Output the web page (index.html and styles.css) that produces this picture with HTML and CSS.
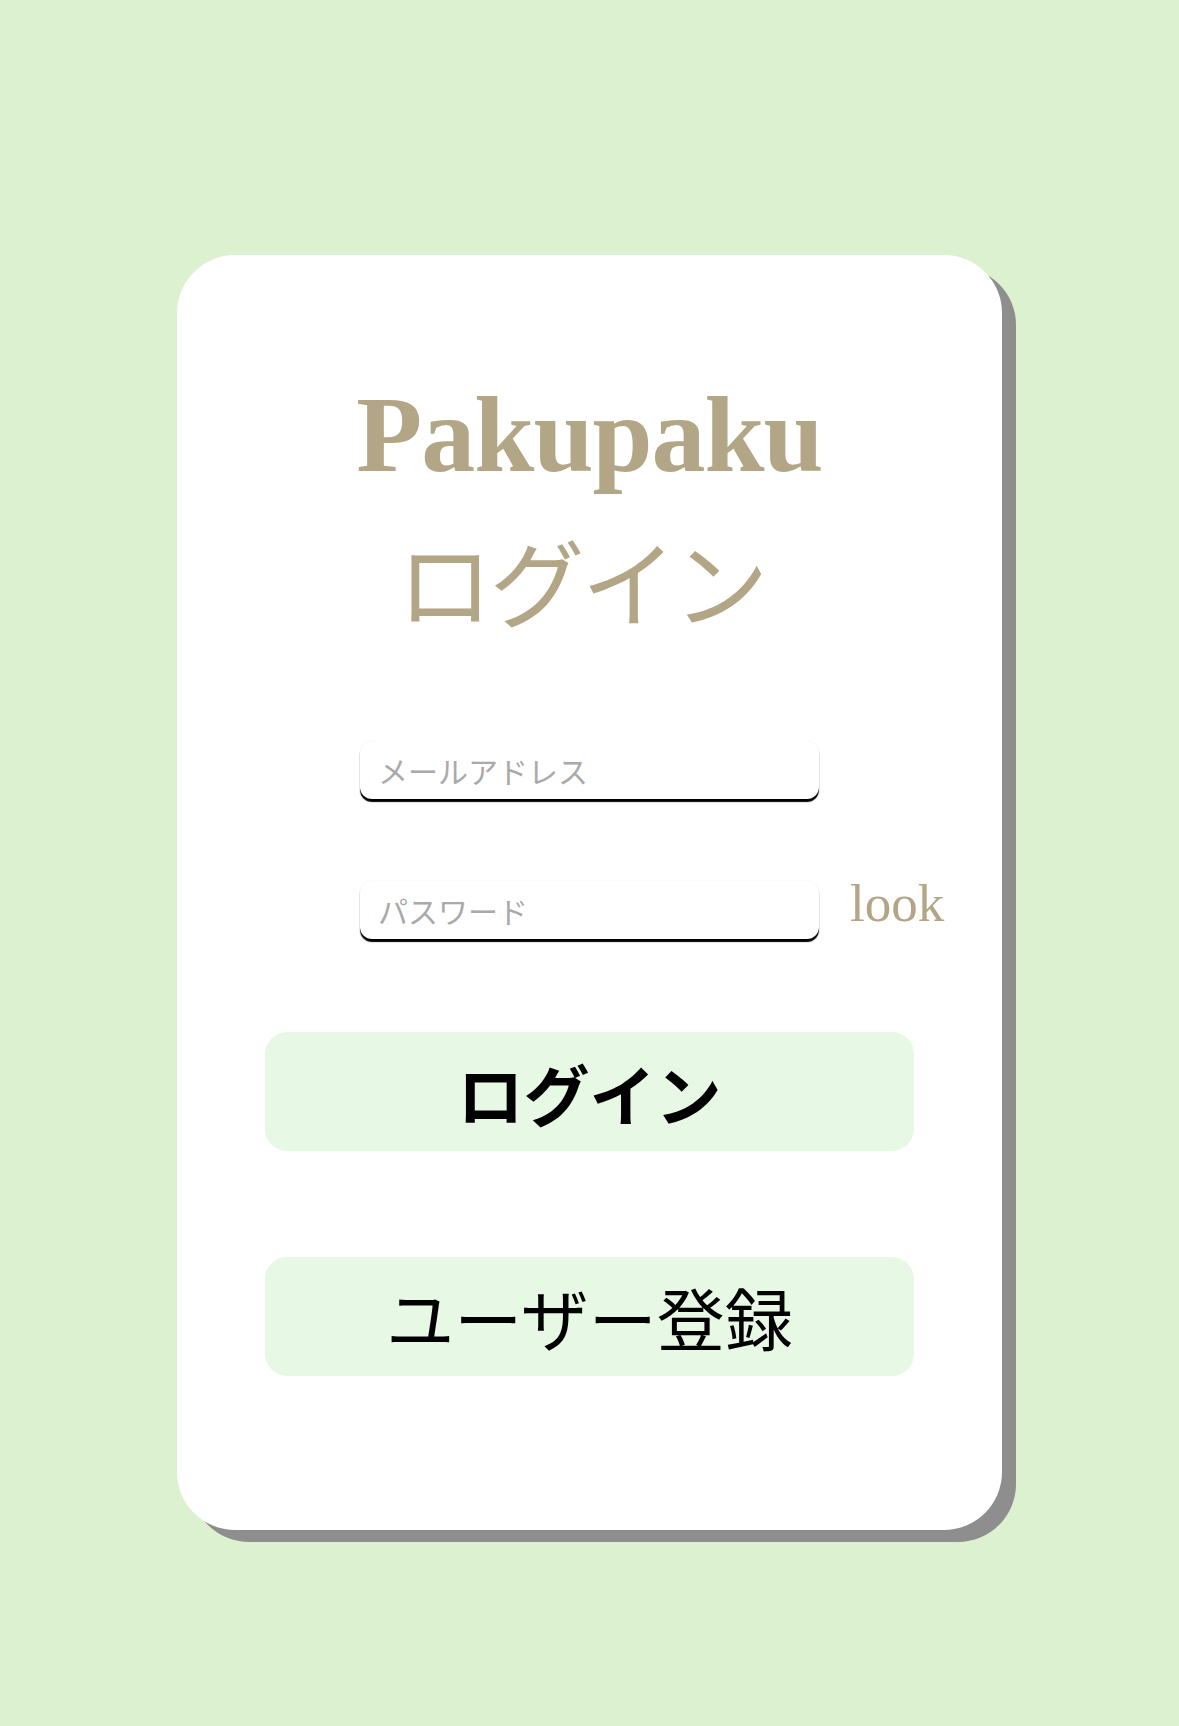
FILE: index.html
```html
<!DOCTYPE html>
<html lang="ja">
<head>
    <meta charset="UTF-8">
    <meta name="viewport" content="width=device-width, initial-scale=1.0">
    <title>Pakupaku ログイン</title>
    <link rel="stylesheet" href="styles.css">
</head>
<body>
    <div class="login-card">
        <h1 class="login-title">
            <span class="title-app">Pakupaku</span>
            <span class="title-page">ログイン</span>
        </h1>

        <form id="loginForm" class="login-form">
            <div class="field-row">
                <input type="email" name="email" placeholder="メールアドレス" required>
            </div>
            <div class="field-row field-row-pass">
                <input type="password" name="password" placeholder="パスワード" required>
                <span class="look-toggle" id="lookToggle">look</span>
            </div>
            <button type="submit" class="main-button login-button">ログイン</button>
        </form>

        <button class="main-button register-button">ユーザー登録</button>
    </div>

    <script>
        const lookToggle = document.getElementById("lookToggle");
        const passInput = document.querySelector("input[name=password]");

        lookToggle.addEventListener("click", () => {
            passInput.type = passInput.type == "password" ? "text" : "password";
        });

        document.getElementById("loginForm").addEventListener("submit", e => {
            e.preventDefault();
        });
    </script>
</body>
</html>
```

FILE: styles.css
```css
body {
    margin: 0;
    padding: 255px 0 0;
    min-height: 100vh;
    box-sizing: border-box;
    background-color: #dcf1d0;
    font-family: "Noto Sans CJK JP", "Noto Sans", sans-serif;
}

.login-card {
    width: 825px;
    height: 1275px;
    margin: 0 auto;
    box-sizing: border-box;
    padding-top: 126px;
    background: #fff;
    border-radius: 58px;
    box-shadow: 14px 12px 0 #8e8e8e;
    display: flex;
    flex-direction: column;
    align-items: center;
}

.login-title {
    margin: 0;
    display: flex;
    flex-direction: column;
    align-items: center;
    color: #b3a687;
    font-weight: normal;
}

.title-app {
    font-family: "Liberation Serif", "Noto Sans CJK JP", serif;
    font-weight: bold;
    font-size: 108px;
    line-height: 1;
    letter-spacing: -1px;
}

.title-page {
    margin-top: 43px;
    margin-right: 16px;
    font-family: "Noto Sans CJK JP", sans-serif;
    font-size: 95px;
    line-height: 1;
    letter-spacing: -3px;
}

.login-form {
    width: 100%;
    margin-top: 114px;
    display: flex;
    flex-direction: column;
    align-items: center;
}

.field-row {
    width: 100%;
    display: grid;
    grid-template-columns: 1fr 459px 1fr;
    align-items: center;
}

.field-row input {
    grid-column: 2;
}

.field-row-pass {
    margin-top: 82px;
}

input {
    width: 100%;
    height: 58px;
    box-sizing: border-box;
    padding: 0 18px;
    border: none;
    border-radius: 12px;
    box-shadow: 0 3px 1px #000, 0 0 1px rgba(0, 0, 0, 0.12);
    font-family: "Noto Sans CJK JP", sans-serif;
    font-size: 30px;
    color: #333;
    outline: none;
}

input::placeholder {
    color: #a9a9a9;
}

.look-toggle {
    margin-left: 31px;
    font-family: "Liberation Serif", serif;
    font-size: 53px;
    color: #b3a687;
    cursor: pointer;
    line-height: 1;
    margin-top: -14px;
}

.main-button {
    width: 649px;
    height: 119px;
    border: none;
    border-radius: 22px;
    background: #e7f8e5;
    color: #000;
    font-family: "Noto Sans CJK JP", sans-serif;
    font-size: 66px;
    cursor: pointer;
    padding: 0;
}

.login-button {
    margin-top: 93px;
    font-weight: bold;
}

.register-button {
    margin-top: 106px;
    font-size: 68px;
    font-weight: normal;
}
```
